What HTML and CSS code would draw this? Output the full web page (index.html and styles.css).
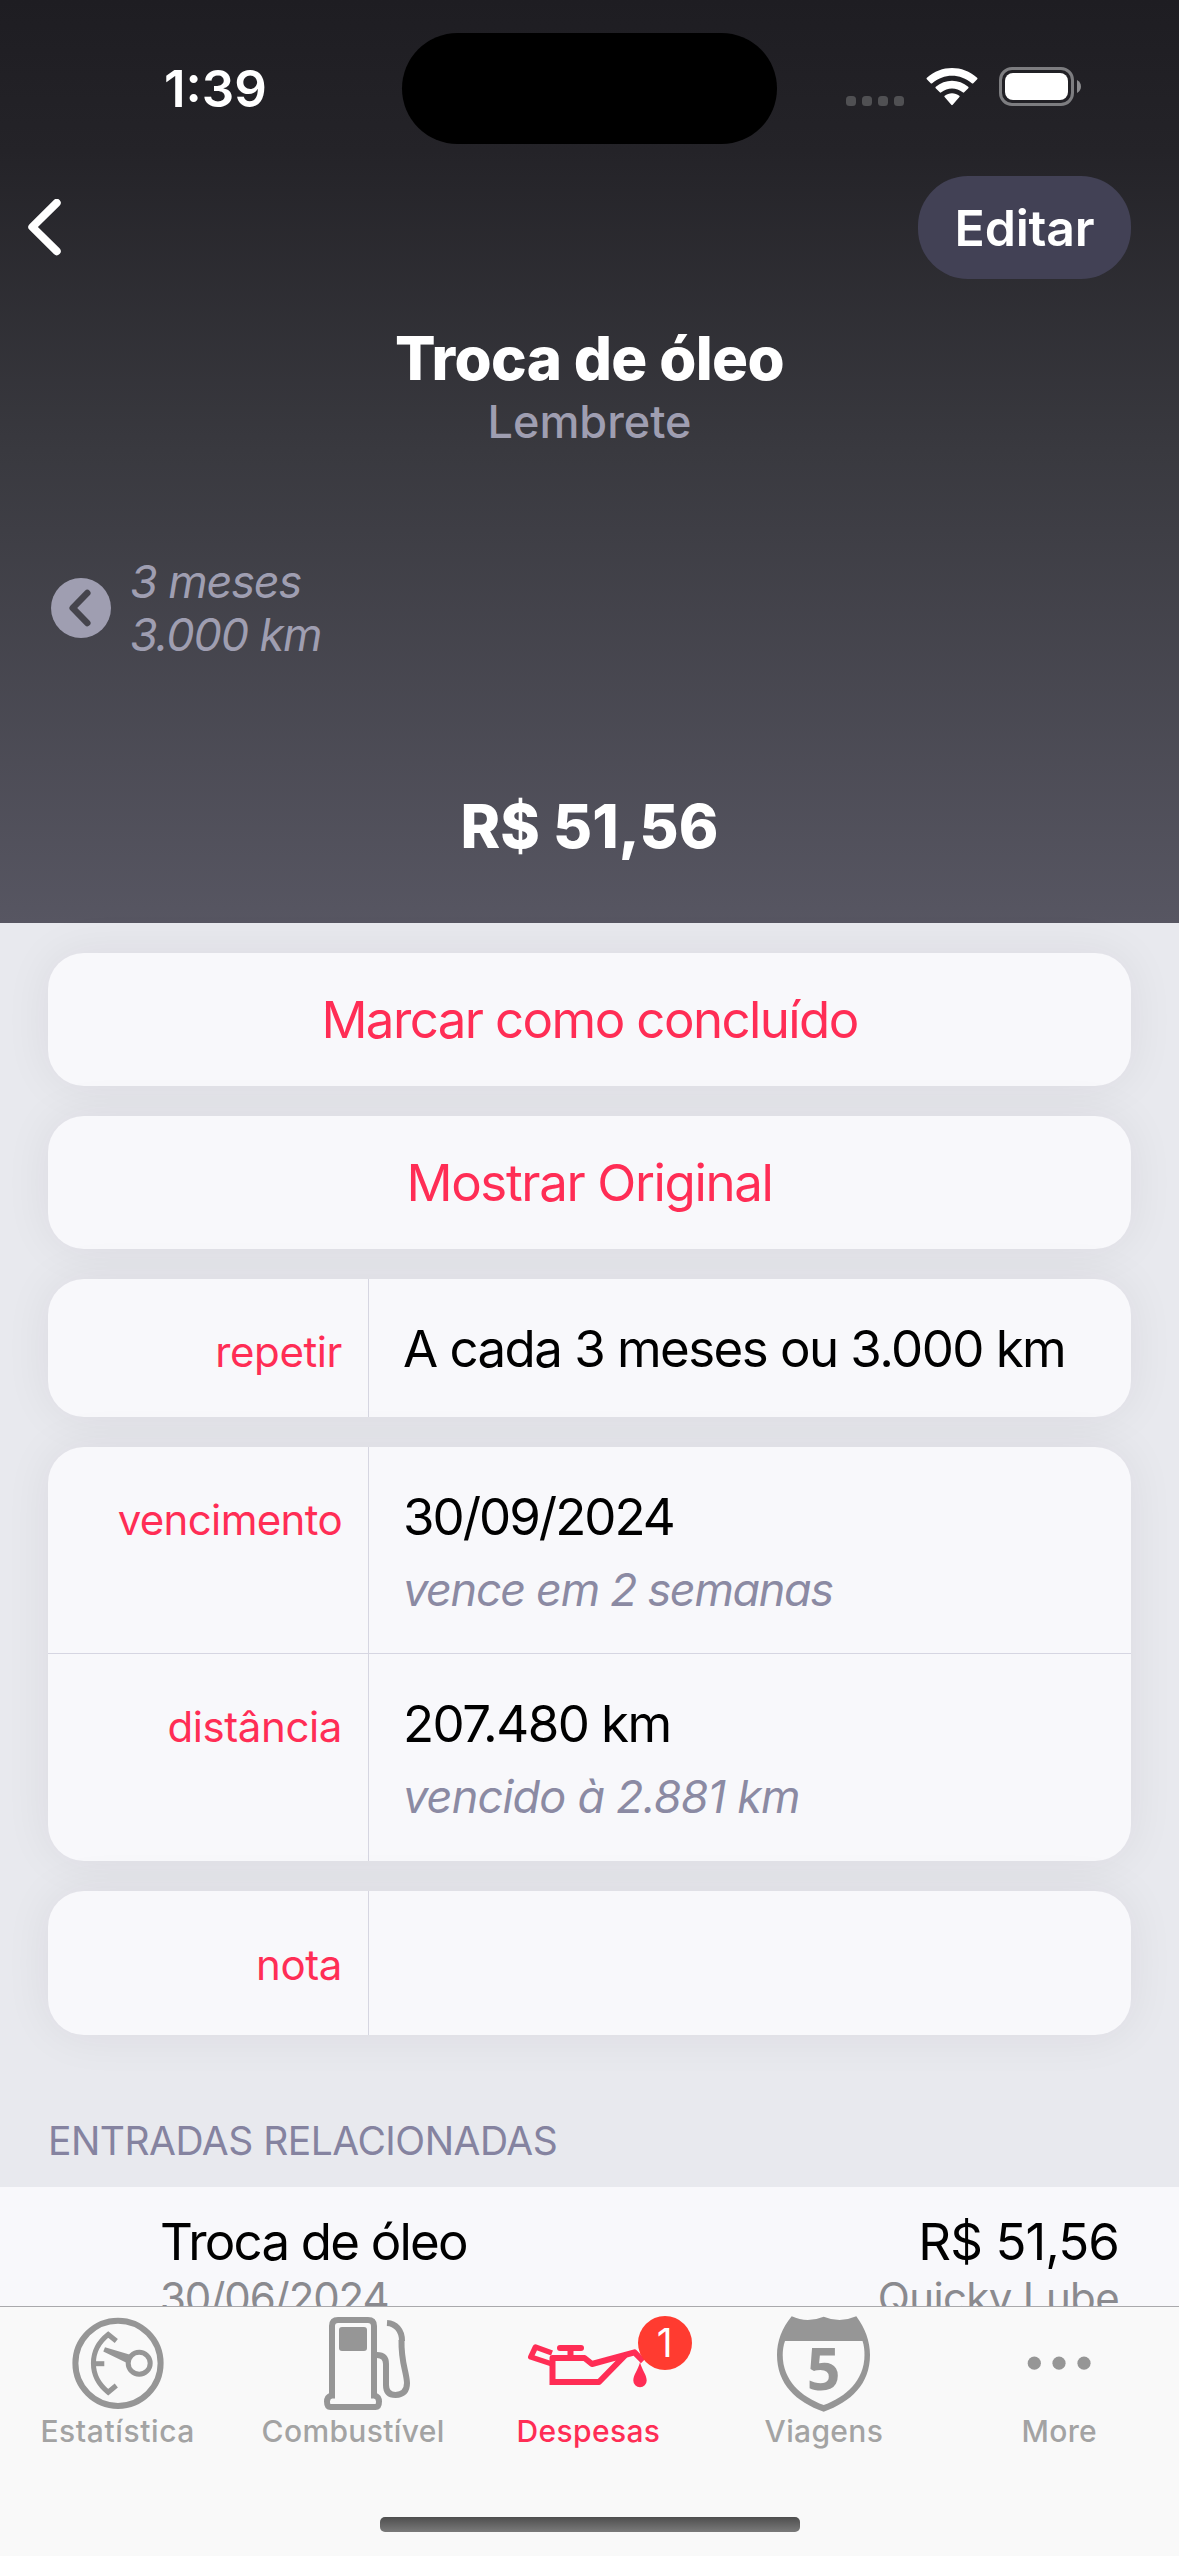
FILE: index.html
```html
<!DOCTYPE html>
<html lang="pt-BR">
<head>
<meta charset="utf-8">
<title>Troca de óleo</title>
<link rel="stylesheet" href="styles.css">
</head>
<body>
<div class="screen">
  <header class="hero">
    <div class="status">
      <div class="time">1:39</div>
      <div class="island"></div>
      <div class="indicators">
        <div class="signal"><i></i><i></i><i></i><i></i></div>
        <svg class="wifi" width="52" height="39" viewBox="0 0 52 39" fill="#fff">
          <path d="M.8 11.2 Q.1 10.4 .9 9.7 C15.5 -3.2 36.5 -3.2 51.1 9.7 Q51.9 10.4 51.2 11.2 L47.3 15.2 Q46.6 15.9 45.8 15.2 C34.3 5.1 17.7 5.1 6.2 15.2 Q5.4 15.9 4.7 15.2 Z"/>
          <path d="M9.7 20.2 Q9 19.5 9.8 18.8 C19 10.8 33 10.8 42.2 18.8 Q43 19.5 42.3 20.2 L38.2 24.3 Q37.5 25 36.7 24.3 C30.6 19.2 21.4 19.2 15.3 24.3 Q14.5 25 13.8 24.3 Z"/>
          <path d="M18.6 29.1 Q17.9 28.4 18.7 27.7 C22.8 24.3 29.2 24.3 33.3 27.7 Q34.1 28.4 33.4 29.1 L26.7 36.8 Q26 37.5 25.3 36.8 Z"/>
        </svg>
        <svg class="battery" width="82" height="39" viewBox="0 0 82 39">
          <rect x="1.5" y="1.5" width="72" height="36" rx="11.5" fill="none" stroke="#7d7d80" stroke-width="3"/>
          <rect x="6" y="6" width="63" height="27" rx="8" fill="#fff"/>
          <path d="M78 13 C83.3 15.5 83.3 23.5 78 26 Z" fill="#8b8b8e"/>
        </svg>
      </div>
    </div>
    <nav class="nav">
      <svg width="34" height="58" viewBox="0 0 34 58"><path d="M29.7 3.800 L5.300 28 L29.700 52.200" fill="none" stroke="#fff" stroke-width="8" stroke-linecap="round" stroke-linejoin="round"/></svg>
      <button class="edit">Editar</button>
    </nav>
    <h1 class="title">Troca de óleo</h1>
    <p class="subtitle">Lembrete</p>
    <div class="interval">
      <svg width="60" height="60" viewBox="0 0 60 60"><circle cx="30" cy="30" r="30" fill="#9f9eb1"/><path d="M36.3 15 L21.7 30 L36.3 45" fill="none" stroke="#45444c" stroke-width="6.5" stroke-linecap="round" stroke-linejoin="round"/></svg>
      <div>
        <div>3 meses</div>
        <div>3.000 km</div>
      </div>
    </div>
    <p class="price">R$ 51,56</p>
  </header>

  <main class="content">
    <section class="card action">Marcar como concluído</section>
    <section class="card action original">Mostrar Original</section>
    <section class="card">
      <div class="row row-repeat">
        <div class="label short">repetir</div>
        <div class="value"><div class="main">A cada 3 meses ou 3.000 km</div></div>
      </div>
    </section>
    <section class="card">
      <div class="row row-due">
        <div class="label">vencimento</div>
        <div class="value"><div class="main date">30/09/2024</div><div class="hint">vence em 2 semanas</div></div>
      </div>
      <div class="row row-distance">
        <div class="label short">distância</div>
        <div class="value"><div class="main">207.480 km</div><div class="hint overdue">vencido à 2.881 km</div></div>
      </div>
    </section>
    <section class="card">
      <div class="row row-note">
        <div class="label short">nota</div>
        <div class="value"></div>
      </div>
    </section>
    <h2 class="section-title">ENTRADAS RELACIONADAS</h2>
  </main>

  <div class="entry">
    <div class="entry-top"><span>Troca de óleo</span><span class="amount">R$ 51,56</span></div>
    <div class="entry-bottom"><span class="entry-date">30/06/2024</span><span>Quicky Lube</span></div>
  </div>

  <footer class="tabbar">
    <div class="tabs">
      <div class="tab wide">
        <svg width="96" height="96" viewBox="0 0 96 96" fill="none" stroke="#969696">
          <circle cx="48" cy="49.3" r="42.6" stroke-width="6"/>
          <path d="M46.3 27 L38.2 20.5 C18.5 36 18.5 62.5 38.2 78.2 L46.3 71.5" stroke-width="5"/>
          <path d="M24 49.7 H34.3" stroke-width="5"/>
          <circle cx="69.2" cy="49.3" r="11" stroke-width="5"/>
          <path d="M35 33.3 L61 41 L57 49 L33.3 37.5 Z" fill="#969696" stroke="none"/>
        </svg>
        <span>Estatística</span>
      </div>
      <div class="tab">
        <svg width="96" height="96" viewBox="0 0 96 96" fill="none" stroke="#969696">
          <path d="M27 84.5 V12 Q27 6 33 6 H63 Q69 6 69 12 V84.5" stroke-width="6"/>
          <path d="M26 81.5 Q22 83 22 87.5 Q22 93 25.5 93 H70.5 Q74 93 74 87.5 Q74 83 70 81.5" stroke-width="6"/>
          <rect x="34" y="13" width="28" height="24" rx="3" fill="#969696" stroke="none"/>
          <path d="M72 41 Q81 41 81 50 V71 Q81 81 90.5 81 Q102 80.5 102 69 C101.5 57 96 49 96.5 26" stroke-width="6"/>
          <path d="M82 9 C90.5 9.5 97 16 97 27" stroke-width="6"/>
        </svg>
        <span>Combustível</span>
      </div>
      <div class="tab active">
        <svg width="124" height="96" viewBox="0 0 124 96" fill="none" stroke="#ff2d55">
          <path d="M26.5 68 V44 H58.5 L66 50 L108.5 38.3 L115 45 M98 42.5 L73 68 H26.5" stroke-width="6" stroke-linejoin="round" stroke-linecap="square"/>
          <path d="M26 39 L9.5 33 L4.8 43 L26 50" stroke-width="5.5" stroke-linejoin="round"/>
          <rect x="31" y="31" width="27" height="6" rx="3" fill="#ff2d55" stroke="none"/>
          <path d="M44.5 36 V43" stroke-width="6"/>
          <path d="M114 48.3 C116 56 120.7 61 120.7 66.5 A6.7 6.7 0 0 1 107.3 66.5 C107.3 61 112 56 114 48.3Z" fill="#ff2d55" stroke="none"/>
        </svg>
        <div class="badge">1</div>
        <span>Despesas</span>
      </div>
      <div class="tab">
        <svg width="96" height="98" viewBox="0 0 96 98">
          <path d="M15.7 2.3 Q31 9.5 47.7 2.7 Q64 9.5 80.3 2.3 C89 14 94 27 94 41 C94 70 75 88 47.7 97.7 C20 88 1 70 1 41 C1 27 6 14 15.7 2.3Z" fill="#969696"/>
          <path d="M9 27 H86.5 C88 31 88.5 36 88.5 41 C88.5 66 70 83 47.7 91 C25 83 6.7 66 6.7 41 C6.7 36 7.5 31 9 27Z" fill="#f9f9f9"/>
          <text x="47.7" y="76.3" class="route" text-anchor="middle">5</text>
        </svg>
        <span>Viagens</span>
      </div>
      <div class="tab">
        <svg width="96" height="96" viewBox="0 0 96 96" fill="#969696"><circle cx="23.3" cy="49.2" r="6.6"/><circle cx="48" cy="49.2" r="6.6"/><circle cx="73" cy="49.2" r="6.6"/></svg>
        <span>More</span>
      </div>
    </div>
    <div class="home"></div>
  </footer>
</div>
</body>
</html>
```
FILE: styles.css
```css
* { box-sizing: border-box; }
body { margin: 0; font-family: Inter, "Liberation Sans", sans-serif; color: #000; }
.screen { width: 1179px; height: 2556px; overflow: hidden; display: flex; flex-direction: column; background: #e8e9ee; white-space: nowrap; }
h1, h2, p { margin: 0; }

.hero { flex: none; height: 923px; padding-top: 33px; background: linear-gradient(#1e1d22 0, #242328 150px, #39393f 450px, #575662 923px); color: #fff; text-align: center; }
.status { display: grid; grid-template-columns: 402px 375px 1fr; height: 111px; align-items: center; }
.time { padding-left: 29px; font-size: 51px; font-weight: 600; line-height: 111px; }
.island { height: 111px; border-radius: 56px; background: #000; }
.indicators { display: flex; align-items: flex-start; padding-left: 69px; height: 43px; }
.signal { display: flex; gap: 6px; margin: 29px 22px 0 0; }
.signal i { width: 10px; height: 10px; border-radius: 3.5px; background: #505053; }
.wifi { margin: 1px 21px 0 0; }
.nav { display: flex; justify-content: space-between; align-items: center; height: 103px; margin-top: 32px; padding: 0 48px 0 27px; }
.edit { width: 213px; height: 103px; border: 0; border-radius: 50px; background: #424155; color: #fff; font: 600 50px/102px Inter, "Liberation Sans", sans-serif; padding: 0; letter-spacing: -.2px; }
.title, .price { font-size: 60px; font-weight: 800; line-height: 73px; }
.title { margin-top: 43px; letter-spacing: -.65px; }
.subtitle { font-size: 45px; font-weight: 500; line-height: 54px; color: #9f9eb1; }
.interval { display: flex; align-items: center; gap: 19px; height: 106px; margin-top: 106px; padding-left: 51px; color: #9f9eb1; text-align: left; font-size: 45px; font-style: italic; line-height: 53px; letter-spacing: -1.15px; }
.price { margin-top: 129px; }

.content { flex: none; height: 1264px; padding: 30px 48px 0; display: flex; flex-direction: column; gap: 30px; }
.card { border-radius: 36px; background: #f8f8fb; box-shadow: 0 0 48px rgba(45, 30, 50, .065); overflow: hidden; flex: none; }
.action { height: 133px; text-align: center; line-height: 133px; font-size: 51px; letter-spacing: -1.6px; color: #ff2d55; }
.original { letter-spacing: -1.35px; }
.row { display: grid; grid-template-columns: 321px 1fr; }
.label { border-right: 1px solid #d6d6e1; padding-right: 26px; text-align: right; font-size: 42px; letter-spacing: -.65px; color: #ff2d55; }
.label.short { letter-spacing: -.4px; }
.value { padding-left: 34px; }
.main { font-size: 51px; line-height: 62px; letter-spacing: -1.55px; }
.date { letter-spacing: -2px; }
.hint { font-size: 45px; font-style: italic; letter-spacing: -1.35px; color: #8b8aa3; line-height: 54px; margin-top: 15px; }
.overdue { letter-spacing: -.8px; }
.row-repeat { height: 138px; }
.row-due { height: 207px; border-bottom: 1px solid #d6d6e2; }
.row-distance { height: 207px; }
.row-repeat .label, .row-due .label, .row-distance .label { line-height: 62px; padding-top: 42px; }
.row-repeat .value, .row-due .value, .row-distance .value { padding-top: 39px; }
.row-note { height: 144px; line-height: 147px; }
.section-title { font-size: 39px; font-weight: 400; line-height: 48px; margin-top: 52px; letter-spacing: -.5px; color: #8583a0; }

.entry { flex: none; height: 119px; overflow: hidden; background: #f8f8fb; padding: 24px 60px 0 160px; }
.entry div { display: flex; justify-content: space-between; }
.entry-top { font-size: 51px; line-height: 62px; letter-spacing: -1.8px; }
.amount { letter-spacing: -.95px; }
.entry-bottom { font-size: 42px; line-height: 50px; letter-spacing: -.65px; color: #8a8a8f; }
.entry-date { letter-spacing: -1.1px; }

.tabbar { flex: 1; border-top: 1px solid #a9a9ac; background: #f9f9f9; }
.tabs { display: grid; grid-template-columns: repeat(5, 1fr); width: 1177px; height: 210px; }
.tab { position: relative; display: flex; flex-direction: column; align-items: center; padding-top: 7px; font-size: 30px; font-weight: 500; line-height: 36px; letter-spacing: .35px; color: #a3a3a3; }
.wide { letter-spacing: .6px; }
.tab svg { display: block; flex: none; height: 98px; overflow: visible; margin-bottom: 1px; }
.tab svg[height="96"] { height: 96px; margin-bottom: 3px; }
.tab.active { color: #ff2d55; }
.route { font-family: "Open Sans", sans-serif; font-size: 59px; font-weight: 700; letter-spacing: 0; fill: #969696; }
.badge { position: absolute; left: 167px; top: 9px; width: 54px; height: 54px; border-radius: 50%; background: #ff3b30; color: #fff; font-size: 39px; font-weight: 400; line-height: 54px; text-align: center; }
.home { width: 420px; height: 15px; margin: 0 auto; border-radius: 5px; background: linear-gradient(#4e4e4e, #7a7a7a); }
```
